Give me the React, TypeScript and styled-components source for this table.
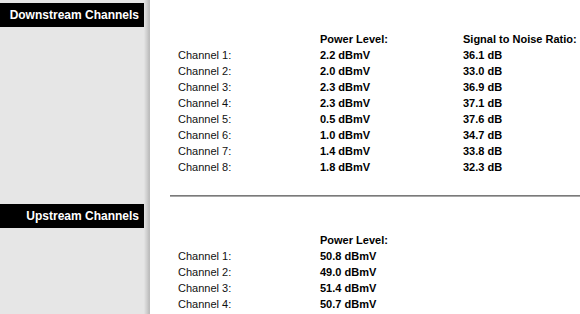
import React from "react";
import styled, { createGlobalStyle } from "styled-components";

const GlobalStyle = createGlobalStyle`
  html, body {
    margin: 0;
    padding: 0;
    background: #ffffff;
  }
  body {
    font-family: "Liberation Sans", Arial, sans-serif;
    font-size: 11px;
    color: #000;
  }
`;

const Page = styled.div`
  width: 580px;
  height: 314px;
  overflow: hidden;
`;

const Section = styled.section`
  display: grid;
  grid-template-columns: 150px 1fr;
`;

const Sidebar = styled.div`
  background: linear-gradient(
    to right,
    #e6e6e6 0,
    #e6e6e6 144px,
    #dcdcdc 145px,
    #cfcfcf 147px,
    #bdbdbd 149px,
    #bdbdbd 150px
  );
  padding-top: 3px;
`;

const TitleBar = styled.h2`
  margin: 0;
  width: 144px;
  height: 24px;
  box-sizing: border-box;
  padding-right: 5px;
  background: #000;
  color: #fff;
  font-size: 12px;
  font-weight: bold;
  line-height: 24px;
  text-align: right;
  white-space: nowrap;
`;

const Content = styled.div`
  padding-top: 31px;
  padding-bottom: ${({ $last }: { $last?: boolean }) => ($last ? "2px" : "4px")};
`;

const Table = styled.div`
  display: grid;
  grid-template-columns: 142px 143px auto;
  padding-left: 28px;
  line-height: 16px;
`;

const Label = styled.div`
  color: #111;
`;

const Value = styled.div<{ $head?: boolean }>`
  font-weight: bold;
  white-space: nowrap;
`;

const Divider = styled.hr`
  margin: 20px 0 0 20px;
  height: 0;
  border: none;
  border-top: 1px solid #7a7a7a;
  border-bottom: 1px solid #a8a8a8;
`;

const downstream = [
  ["2.2 dBmV", "36.1 dB"],
  ["2.0 dBmV", "33.0 dB"],
  ["2.3 dBmV", "36.9 dB"],
  ["2.3 dBmV", "37.1 dB"],
  ["0.5 dBmV", "37.6 dB"],
  ["1.0 dBmV", "34.7 dB"],
  ["1.4 dBmV", "33.8 dB"],
  ["1.8 dBmV", "32.3 dB"],
];

const upstream = ["50.8 dBmV", "49.0 dBmV", "51.4 dBmV", "50.7 dBmV"];

export default function App() {
  return (
    <Page>
      <GlobalStyle />
      <Section>
        <Sidebar>
          <TitleBar>Downstream Channels</TitleBar>
        </Sidebar>
        <Content>
          <Table>
            <div />
            <Value>Power Level:</Value>
            <Value>Signal to Noise Ratio:</Value>
            {downstream.map(([power, snr], i) => (
              <React.Fragment key={i}>
                <Label>Channel {i + 1}:</Label>
                <Value>{power}</Value>
                <Value>{snr}</Value>
              </React.Fragment>
            ))}
          </Table>
          <Divider />
        </Content>
      </Section>
      <Section>
        <Sidebar>
          <TitleBar>Upstream Channels</TitleBar>
        </Sidebar>
        <Content $last>
          <Table>
            <div />
            <Value>Power Level:</Value>
            <div />
            {upstream.map((power, i) => (
              <React.Fragment key={i}>
                <Label>Channel {i + 1}:</Label>
                <Value>{power}</Value>
                <div />
              </React.Fragment>
            ))}
          </Table>
        </Content>
      </Section>
    </Page>
  );
}
